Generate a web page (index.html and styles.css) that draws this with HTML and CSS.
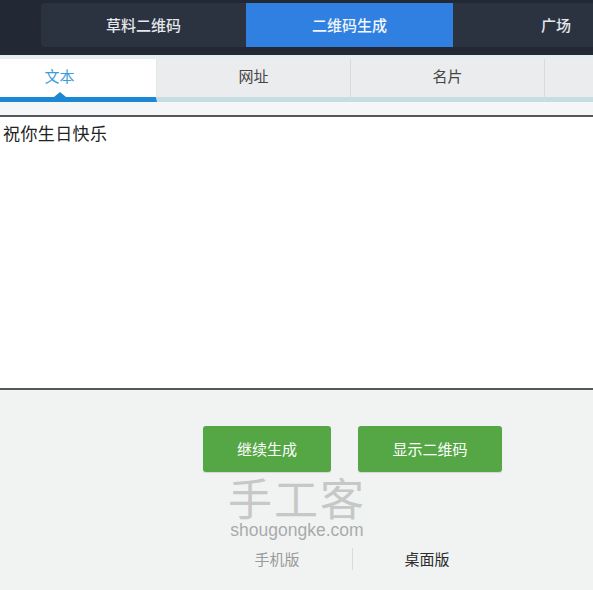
FILE: index.html
```html
<!DOCTYPE html>
<html lang="zh-CN">
<head>
<meta charset="utf-8">
<title>二维码生成</title>
<link rel="stylesheet" href="styles.css">
</head>
<body>
<header class="topbar">
  <nav class="topnav">
    <a class="topnav-item">草料二维码</a>
    <a class="topnav-item active">二维码生成</a>
    <a class="topnav-item last">广场</a>
  </nav>
</header>
<div class="strip"></div>
<div class="subtabs">
  <div class="subtab active">文本<span class="caret"></span></div>
  <div class="subtab">网址</div>
  <div class="subtab">名片</div>
  <div class="subtab rest"></div>
</div>
<div class="gap"></div>
<div class="editor">祝你生日快乐</div>
<main class="bottom">
  <div class="actions">
    <button class="btn btn-continue">继续生成</button>
    <button class="btn btn-show">显示二维码</button>
  </div>
  <div class="footer">
    <a class="footer-link muted">手机版</a>
    <a class="footer-link current">桌面版</a>
  </div>
  <div class="watermark">
    <div class="wm-cn">手工客</div>
    <div class="wm-en">shougongke.com</div>
  </div>
</main>
</body>
</html>
```

FILE: styles.css
```css
* { box-sizing: border-box; }
html, body { margin: 0; padding: 0; }
body {
  width: 593px;
  height: 590px;
  overflow: hidden;
  background: #f1f3f3;
  font-family: "Noto Sans CJK SC", "Liberation Sans", sans-serif;
  position: relative;
}
.topbar {
  height: 55px;
  background: #222934;
  padding: 3px 0 0 41px;
}
.topnav {
  display: flex;
  height: 44px;
  background: #2b3240;
  border-radius: 4px 0 0 4px;
}
.topnav-item {
  flex: 0 0 205px;
  display: flex;
  align-items: center;
  justify-content: center;
  color: #e4e7ec;
  font-size: 15px;
  line-height: 20px;
  font-weight: 500;
}
.topnav-item.active {
  flex-basis: 207px;
  background: #2f80e1;
  color: #f2f6fc;
}
.topnav-item.last {
  flex: 1 1 auto;
  justify-content: flex-start;
  padding-left: 88px;
}
.strip {
  height: 4px;
  background: #e4eef0;
}
.subtabs {
  display: flex;
  height: 43px;
  overflow: hidden;
}
.subtab {
  flex: 0 0 194px;
  height: 43px;
  display: flex;
  align-items: center;
  justify-content: center;
  padding-bottom: 5px;
  background: #eaeced;
  border-right: 1px solid #d4dddd;
  border-bottom: 5px solid #c7dde3;
  color: #454545;
  font-size: 15px;
  line-height: 20px;
  position: relative;
}
.subtab.active {
  flex-basis: 157px;
  padding-right: 37px;
  background: #ffffff;
  color: #3c9bd9;
  border-right-color: #e2e8e8;
  border-bottom-color: #1c88d4;
}
.subtab.rest {
  flex: 1 1 auto;
  border-right: 0;
}
.caret {
  position: absolute;
  left: 54px;
  bottom: 0;
  width: 0;
  height: 0;
  border-left: 6px solid transparent;
  border-right: 6px solid transparent;
  border-bottom: 5px solid #1c88d4;
}
.gap {
  height: 13px;
  background: #f4f6f7;
}
.editor {
  height: 275px;
  background: #ffffff;
  border-top: 2px solid #555758;
  border-bottom: 2px solid #555758;
  padding: 4px 3px;
  font-size: 17px;
  line-height: 24px;
  letter-spacing: 0.4px;
  color: #222;
}
.bottom {
  padding-top: 36px;
}
.actions {
  display: flex;
  gap: 27px;
  padding-left: 203px;
}
.btn {
  height: 46px;
  border: 0;
  border-radius: 3px;
  background: #54a744;
  color: #ffffff;
  font-family: inherit;
  font-size: 15px;
  line-height: 20px;
  padding: 0;
  box-shadow: 0 1px 1px rgba(0,0,0,0.12);
}
.btn-continue { width: 128px; }
.btn-show { width: 144px; }
.footer {
  display: flex;
  padding-left: 202px;
  margin-top: 76px;
}
.footer-link {
  height: 22px;
  display: flex;
  align-items: center;
  justify-content: center;
  font-size: 15px;
  line-height: 20px;
}
.footer-link.muted {
  width: 151px;
  color: #9a9a9a;
  border-right: 1px solid #d9dcdc;
}
.footer-link.current {
  width: 148px;
  color: #2b2b2b;
}
.watermark {
  position: absolute;
  left: 228px;
  top: 475px;
  width: 138px;
  text-align: center;
}
.wm-cn {
  font-size: 44px;
  line-height: 45px;
  letter-spacing: 2px;
  color: #c6c8c8;
}
.wm-en {
  font-family: "Liberation Sans", sans-serif;
  font-size: 17.5px;
  line-height: 20px;
  color: #a9abab;
}
```
